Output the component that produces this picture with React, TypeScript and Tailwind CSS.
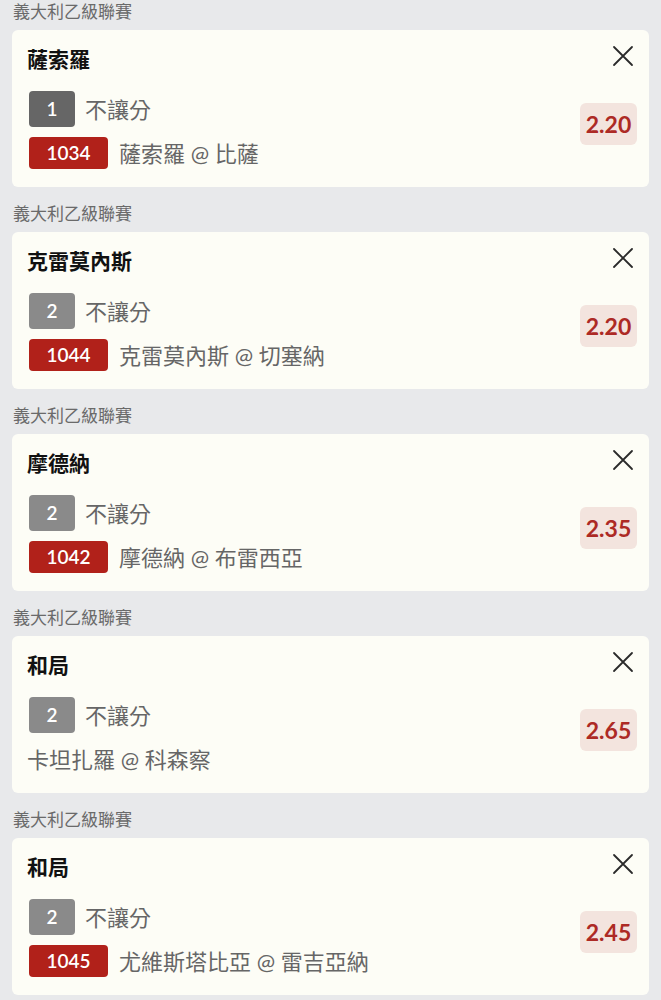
import React from "react";

type Bet = {
  title: string;
  num: string;
  active?: boolean;
  code?: string;
  match: string;
  odds: string;
};

const bets: Bet[] = [
  { title: "薩索羅", num: "1", active: true, code: "1034", match: "薩索羅 @ 比薩", odds: "2.20" },
  { title: "克雷莫內斯", num: "2", code: "1044", match: "克雷莫內斯 @ 切塞納", odds: "2.20" },
  { title: "摩德納", num: "2", code: "1042", match: "摩德納 @ 布雷西亞", odds: "2.35" },
  { title: "和局", num: "2", match: "卡坦扎羅 @ 科森察", odds: "2.65" },
  { title: "和局", num: "2", code: "1045", match: "尤維斯塔比亞 @ 雷吉亞納", odds: "2.45" },
];

const CloseIcon = () => (
  <svg width="22" height="22" viewBox="0 0 22 22" fill="none">
    <path d="M2 2L20 20M20 2L2 20" stroke="#2a2a2a" strokeWidth="1.8" strokeLinecap="round" />
  </svg>
);

const BetCard = ({ bet }: { bet: Bet }) => {
  return (
    <div className="mb-[15px]">
      <div className="h-6 pl-[13px] text-[17px] leading-6 text-[#6a6a6a]">義大利乙級聯賽</div>
      <div className="mt-1.5 mx-3 flex h-[157px] rounded-md bg-[#fdfdf6] pl-[15px] pr-3">
        <div className="flex-1 pt-[14px]">
          <div className="h-[30px] text-[21px] font-bold leading-[30px] text-[#111]">{bet.title}</div>
          <div className="mt-[17px] ml-[2px] flex h-9 items-center">
            <span
              className={
                bet.active
                  ? "flex h-9 w-[46px] items-center justify-center rounded bg-[#666666] text-[19px] font-semibold text-white"
                  : "flex h-9 w-[46px] items-center justify-center rounded bg-[#8a8a8a] text-[19px] font-semibold text-white"
              }
            >
              {bet.num}
            </span>
            <span className="ml-[10px] text-[22px] text-[#666]">不讓分</span>
          </div>
          <div className="mt-[10px] flex h-8 items-center">
            {bet.code && (
              <span className="ml-[2px] mr-[11px] flex h-8 w-[79px] items-center justify-center rounded bg-[#b1211a] text-[19px] font-semibold text-white">
                {bet.code}
              </span>
            )}
            <span className="text-[22px] text-[#666]">{bet.match}</span>
          </div>
        </div>
        <div className="flex flex-col items-end">
          <button className="mt-[15px] mr-[3px] flex h-[22px] w-[22px] items-center justify-center">
            <CloseIcon />
          </button>
          <div className="mt-[36px] flex h-[42px] w-[57px] items-center justify-center rounded-md bg-[#f3e4de] text-[23px] font-bold text-[#ad2a25]">
            {bet.odds}
          </div>
        </div>
      </div>
    </div>
  );
};

export default function App() {
  return (
    <div
      className="min-h-[1000px] w-[661px] bg-[#e8e9eb]"
      style={{ fontFamily: 'Lato, "Noto Sans CJK TC", sans-serif' }}
    >
      {bets.map((b, i) => (
        <BetCard key={i} bet={b} />
      ))}
    </div>
  );
}
